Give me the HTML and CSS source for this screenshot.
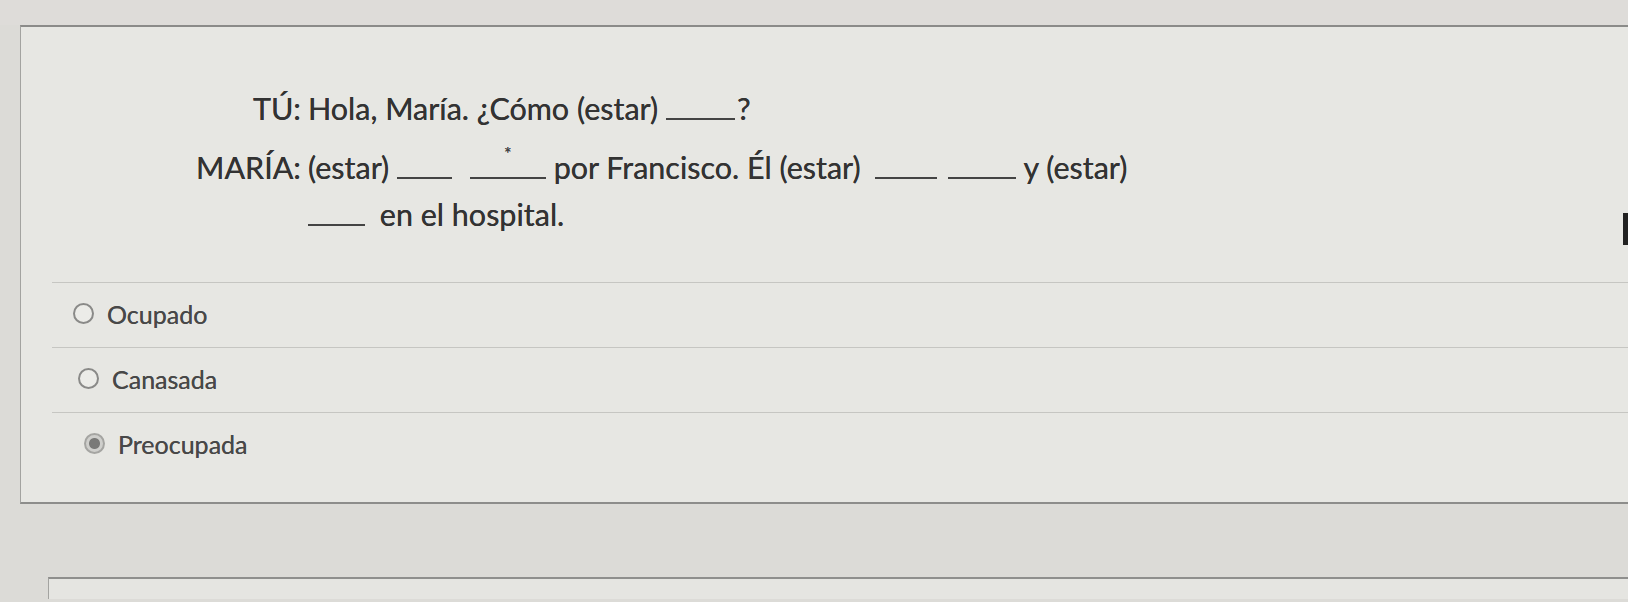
FILE: index.html
```html
<!DOCTYPE html>
<html lang="es">
<head>
<meta charset="utf-8">
<title>Pregunta</title>
<link rel="stylesheet" href="styles.css">
</head>
<body>
<div class="top-strip"></div>
<div class="card">
  <div class="dialog">
    <div class="speaker">TÚ:</div>
    <div class="speech">Hola, María. ¿Cómo (estar) <span class="blank b-q"></span>?</div>
    <div class="speaker">MARÍA:</div>
    <div class="speech">(estar) <span class="blank b-1"></span> <span class="blank b-2"><span class="dot">*</span></span> por Francisco. Él (estar) <span class="blank b-3"></span> <span class="blank b-4"></span> y (estar) <span class="blank b-5"></span> en el hospital.</div>
  </div>
  <ul class="options">
    <li class="option"><span class="radio"></span><span class="label">Ocupado</span></li>
    <li class="option"><span class="radio"></span><span class="label">Canasada</span></li>
    <li class="option"><span class="radio checked"></span><span class="label">Preocupada</span></li>
  </ul>
</div>
<div class="next-card"></div>
<div class="edge-mark"></div>
</body>
</html>
```
FILE: styles.css
```css
html, body {
  margin: 0;
  padding: 0;
}
body {
  width: 1628px;
  height: 602px;
  overflow: hidden;
  background: #dcdbd7;
  font-family: Lato, "Open Sans", sans-serif;
  color: #333333;
  position: relative;
}
.top-strip {
  height: 25px;
  background: #dedcd9;
}
.card {
  margin-left: 20px;
  border-top: 2px solid #8b8b89;
  border-left: 1px solid #a3a3a0;
  border-bottom: 2px solid #8d8d8b;
  background: #e7e7e3;
  padding-top: 58px;
  padding-bottom: 25px;
}
.dialog {
  display: grid;
  grid-template-columns: 280px 850px;
  column-gap: 7px;
  row-gap: 12px;
  font-size: 30.5px;
  line-height: 47px;
  text-shadow: 0 0 0.6px #333;
}
.speaker {
  text-align: right;
}
.blank {
  display: inline-block;
  width: 57px;
  height: 20px;
  border-bottom: 2px solid #444;
  vertical-align: baseline;
  position: relative;
}
.b-q {
  width: 69px;
  margin-right: 2px;
}
.b-1 {
  width: 55px;
}
.b-2 {
  width: 76px;
  margin-left: 10px;
}
.b-3 {
  width: 62px;
  margin-left: 6px;
}
.b-4 {
  width: 68px;
  margin-left: 4px;
}
.b-5 {
  width: 57px;
  margin-right: 7px;
}
.dot {
  position: absolute;
  left: 34px;
  top: -14px;
  font-size: 18px;
  line-height: 20px;
  color: #444;
}
.options {
  list-style: none;
  margin: 44px 0 0 31px;
  padding: 0;
}
.option {
  display: flex;
  align-items: center;
  gap: 13px;
  height: 65px;
  padding-left: 21px;
  padding-bottom: 3px;
  border-top: 1px solid #c6c6c2;
  box-sizing: border-box;
  font-size: 25px;
  color: #484848;
  text-shadow: 0 0 0.5px #555;
}
.option:nth-child(2) {
  padding-left: 26px;
}
.option:nth-child(3) {
  padding-left: 32px;
}
.radio {
  width: 21px;
  height: 21px;
  border-radius: 50%;
  border: 2px solid #8a8a88;
  box-sizing: border-box;
  background: #ecece8;
  flex: none;
}
.radio.checked {
  border-color: #a5a5a2;
  background: radial-gradient(circle, #7a7a78 0 5px, #cfcfcc 6px);
}
.next-card {
  margin: 73px 0 0 48px;
  border-top: 2px solid #8f8f8d;
  border-left: 1px solid #a3a3a0;
  height: 20px;
  background: #e5e5e1;
}
.edge-mark {
  position: absolute;
  left: 1623px;
  top: 213px;
  width: 5px;
  height: 32px;
  background: #222;
}
```
